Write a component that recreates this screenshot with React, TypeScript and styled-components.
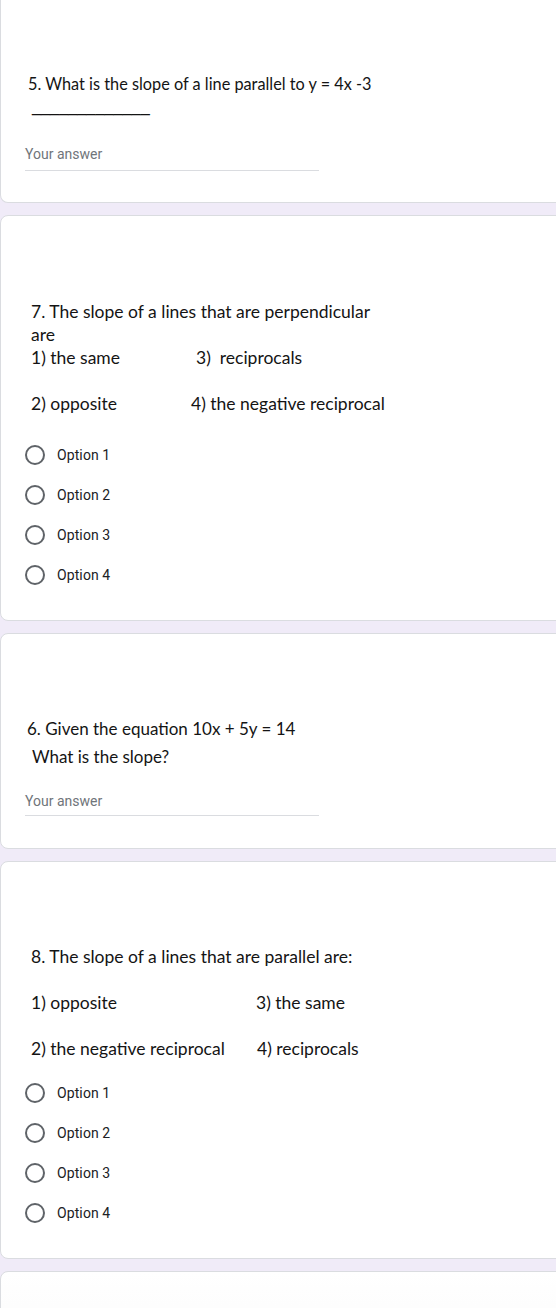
import React from "react";
import styled, { createGlobalStyle } from "styled-components";

const Global = createGlobalStyle`
  html, body { margin: 0; padding: 0; }
  body {
    background: #f0ebf8;
    font-family: Roboto, "Liberation Sans", Arial, sans-serif;
    overflow-x: hidden;
  }
`;

const Page = styled.main`
  width: 556px;
  min-height: 1308px;
  overflow: hidden;
  display: flex;
  flex-direction: column;
`;

const Card = styled.section<{ $open?: boolean; $padTop: number; $padBottom: number; $fade?: boolean }>`
  background: ${(p) => (p.$fade ? "linear-gradient(#ffffff, #f9f9f9)" : "#ffffff")};
  border: 1px solid #dadce0;
  border-top: ${(p) => (p.$open ? "none" : "1px solid #dadce0")};
  border-radius: ${(p) => (p.$open ? "0 0 8px 8px" : "8px")};
  margin-right: -16px;
  margin-bottom: 12px;
  padding: ${(p) => p.$padTop}px 24px ${(p) => p.$padBottom}px 24px;
  display: flex;
  flex-direction: column;
`;

const Question = styled.div<{ $size: number }>`
  font-family: Lato, "Open Sans", "Liberation Sans", sans-serif;
  font-size: ${(p) => p.$size}px;
  line-height: 23px;
  color: #141414;
  display: flex;
  flex-direction: column;
`;

const Line = styled.div<{ $indent?: number; $gapTop?: number }>`
  padding-left: ${(p) => p.$indent ?? 0}px;
  margin-top: ${(p) => p.$gapTop ?? 0}px;
  min-height: 23px;
  white-space: pre;
`;

const Rule = styled.div<{ $indent?: number }>`
  padding-left: ${(p) => p.$indent ?? 0}px;
  min-height: 23px;
  font-family: "Liberation Sans", Arial, sans-serif;
  white-space: pre;
`;

const Pair = styled.div<{ $indent?: number }>`
  display: flex;
  padding-left: ${(p) => p.$indent ?? 0}px;
  min-height: 23px;
  white-space: pre;
`;

const PairCell = styled.span<{ $width?: number }>`
  width: ${(p) => (p.$width ? `${p.$width}px` : "auto")};
  flex: none;
`;

const Answer = styled.div<{ $gapTop: number; $padBottom: number }>`
  margin-top: ${(p) => p.$gapTop}px;
  width: 294px;
  padding-bottom: ${(p) => p.$padBottom}px;
  border-bottom: 1px solid #dadce0;
  font-size: 14px;
  line-height: 16px;
  color: #70757a;
`;

const Options = styled.div<{ $gapTop: number }>`
  margin-top: ${(p) => p.$gapTop}px;
  display: flex;
  flex-direction: column;
`;

const OptionRow = styled.label`
  display: flex;
  align-items: center;
  height: 40px;
  gap: 12px;
  font-size: 14px;
  color: #202124;
  letter-spacing: 0.1px;
`;

const Radio = styled.span`
  width: 20px;
  height: 20px;
  box-sizing: border-box;
  border: 2px solid #5f6368;
  border-radius: 50%;
  flex: none;
`;

const OptionList: React.FC = () => (
  <>
    {["Option 1", "Option 2", "Option 3", "Option 4"].map((o) => (
      <OptionRow key={o}>
        <Radio />
        <span>{o}</span>
      </OptionRow>
    ))}
  </>
);

export default function App() {
  return (
    <>
      <Global />
      <Page>
        <Card $open $padTop={72} $padBottom={31}>
          <Question $size={16.3}>
            <Line $indent={3}>5. What is the slope of a line parallel to y = 4x -3</Line>
            <Rule $indent={7}>_____________</Rule>
          </Question>
          <Answer $gapTop={28} $padBottom={8}>Your answer</Answer>
        </Card>

        <Card $padTop={84} $padBottom={25}>
          <Question $size={17.5}>
            <Line $indent={6}>7. The slope of a lines that are perpendicular</Line>
            <Line $indent={6}>are</Line>
            <Pair $indent={6}>
              <PairCell $width={165}>1) the same</PairCell>
              <PairCell>3)  reciprocals</PairCell>
            </Pair>
            <Line />
            <Pair $indent={6}>
              <PairCell $width={160}>2) opposite</PairCell>
              <PairCell>4) the negative reciprocal</PairCell>
            </Pair>
          </Question>
          <Options $gapTop={20}>
            <OptionList />
          </Options>
        </Card>

        <Card $padTop={83} $padBottom={32}>
          <Question $size={17}>
            <Line $indent={2}>6. Given the equation 10x + 5y = 14</Line>
            <Line $indent={7} $gapTop={5}>What is the slope?</Line>
          </Question>
          <Answer $gapTop={25} $padBottom={6}>Your answer</Answer>
        </Card>

        <Card $padTop={83} $padBottom={25}>
          <Question $size={17.5}>
            <Line $indent={6}>8. The slope of a lines that are parallel are:</Line>
            <Line />
            <Pair $indent={6}>
              <PairCell $width={225}>1) opposite</PairCell>
              <PairCell>3) the same</PairCell>
            </Pair>
            <Line />
            <Pair $indent={6}>
              <PairCell $width={226}>2) the negative reciprocal</PairCell>
              <PairCell>4) reciprocals</PairCell>
            </Pair>
          </Question>
          <Options $gapTop={13}>
            <OptionList />
          </Options>
        </Card>

        <Card $fade $padTop={40} $padBottom={40}>
          <Line />
        </Card>
      </Page>
    </>
  );
}
